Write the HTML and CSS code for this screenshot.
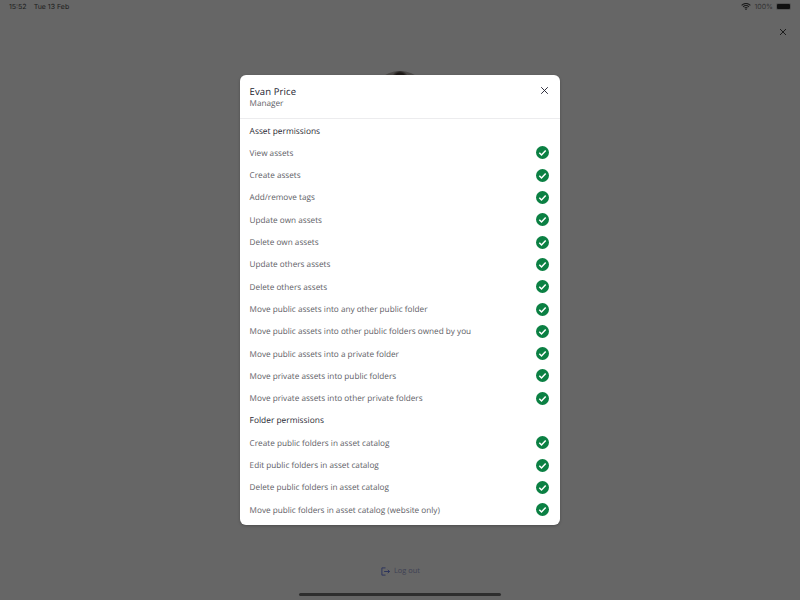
FILE: index.html
```html
<!DOCTYPE html>
<html lang="en">
<head>
<meta charset="utf-8">
<title>Evan Price permissions</title>
<link rel="stylesheet" href="styles.css">
</head>
<body>
<div class="screen">
  <header class="status">
    <div class="status-left"><span>15:52</span><span>Tue 13 Feb</span></div>
    <div class="status-right">
      <svg class="wifi" width="10" height="7" viewBox="0 0 11 8"><path d="M0.5 2.6a7 7 0 0 1 10 0M2.2 4.3a4.6 4.6 0 0 1 6.6 0M3.9 5.9a2.2 2.2 0 0 1 3.2 0" fill="none" stroke="#1a1a1a" stroke-width="1.2"/><circle cx="5.5" cy="7.1" r=".9" fill="#1a1a1a"/></svg>
      <span>100%</span>
      <span class="battery"><span class="battery-fill"></span></span>
    </div>
  </header>
  <div class="page-close">
    <svg width="8" height="8" viewBox="0 0 8 8"><path d="M1 1l6 6M7 1L1 7" stroke="#1c1c1c" stroke-width="1" fill="none"/></svg>
  </div>
  <div class="avatar"></div>
  <div class="logout">
    <svg width="9" height="9" viewBox="0 0 10 10"><path d="M5 1H1v8h4M3.5 5h6M7.5 3.2l2 1.8-2 1.8" fill="none" stroke="#28305c" stroke-width="1"/></svg>
    <span>Log out</span>
  </div>
  <div class="home-bar"></div>

  <section class="modal">
    <div class="modal-head">
      <div>
        <div class="name">Evan Price</div>
        <div class="role">Manager</div>
      </div>
      <svg class="modal-close" width="9" height="9" viewBox="0 0 9 9"><path d="M1.2 1.2l6.6 6.6M7.8 1.2L1.2 7.8" stroke="#1a1a2a" stroke-width=".9" fill="none"/></svg>
    </div>
    <div class="modal-body">
      <div class="heading">Asset permissions</div>
      <div class="row"><span>View assets</span><svg class="check" viewBox="0 0 13 13"><circle cx="6.5" cy="6.5" r="6.5"/><path d="M3.3 6.8l2.2 2.2 4.2-4.6"/></svg></div>
      <div class="row"><span>Create assets</span><svg class="check" viewBox="0 0 13 13"><circle cx="6.5" cy="6.5" r="6.5"/><path d="M3.3 6.8l2.2 2.2 4.2-4.6"/></svg></div>
      <div class="row"><span>Add/remove tags</span><svg class="check" viewBox="0 0 13 13"><circle cx="6.5" cy="6.5" r="6.5"/><path d="M3.3 6.8l2.2 2.2 4.2-4.6"/></svg></div>
      <div class="row"><span>Update own assets</span><svg class="check" viewBox="0 0 13 13"><circle cx="6.5" cy="6.5" r="6.5"/><path d="M3.3 6.8l2.2 2.2 4.2-4.6"/></svg></div>
      <div class="row"><span>Delete own assets</span><svg class="check" viewBox="0 0 13 13"><circle cx="6.5" cy="6.5" r="6.5"/><path d="M3.3 6.8l2.2 2.2 4.2-4.6"/></svg></div>
      <div class="row"><span>Update others assets</span><svg class="check" viewBox="0 0 13 13"><circle cx="6.5" cy="6.5" r="6.5"/><path d="M3.3 6.8l2.2 2.2 4.2-4.6"/></svg></div>
      <div class="row"><span>Delete others assets</span><svg class="check" viewBox="0 0 13 13"><circle cx="6.5" cy="6.5" r="6.5"/><path d="M3.3 6.8l2.2 2.2 4.2-4.6"/></svg></div>
      <div class="row"><span>Move public assets into any other public folder</span><svg class="check" viewBox="0 0 13 13"><circle cx="6.5" cy="6.5" r="6.5"/><path d="M3.3 6.8l2.2 2.2 4.2-4.6"/></svg></div>
      <div class="row"><span>Move public assets into other public folders owned by you</span><svg class="check" viewBox="0 0 13 13"><circle cx="6.5" cy="6.5" r="6.5"/><path d="M3.3 6.8l2.2 2.2 4.2-4.6"/></svg></div>
      <div class="row"><span>Move public assets into a private folder</span><svg class="check" viewBox="0 0 13 13"><circle cx="6.5" cy="6.5" r="6.5"/><path d="M3.3 6.8l2.2 2.2 4.2-4.6"/></svg></div>
      <div class="row"><span>Move private assets into public folders</span><svg class="check" viewBox="0 0 13 13"><circle cx="6.5" cy="6.5" r="6.5"/><path d="M3.3 6.8l2.2 2.2 4.2-4.6"/></svg></div>
      <div class="row"><span>Move private assets into other private folders</span><svg class="check" viewBox="0 0 13 13"><circle cx="6.5" cy="6.5" r="6.5"/><path d="M3.3 6.8l2.2 2.2 4.2-4.6"/></svg></div>
      <div class="heading">Folder permissions</div>
      <div class="row"><span>Create public folders in asset catalog</span><svg class="check" viewBox="0 0 13 13"><circle cx="6.5" cy="6.5" r="6.5"/><path d="M3.3 6.8l2.2 2.2 4.2-4.6"/></svg></div>
      <div class="row"><span>Edit public folders in asset catalog</span><svg class="check" viewBox="0 0 13 13"><circle cx="6.5" cy="6.5" r="6.5"/><path d="M3.3 6.8l2.2 2.2 4.2-4.6"/></svg></div>
      <div class="row"><span>Delete public folders in asset catalog</span><svg class="check" viewBox="0 0 13 13"><circle cx="6.5" cy="6.5" r="6.5"/><path d="M3.3 6.8l2.2 2.2 4.2-4.6"/></svg></div>
      <div class="row"><span>Move public folders in asset catalog (website only)</span><svg class="check" viewBox="0 0 13 13"><circle cx="6.5" cy="6.5" r="6.5"/><path d="M3.3 6.8l2.2 2.2 4.2-4.6"/></svg></div>
    </div>
  </section>
</div>
</body>
</html>
```
FILE: styles.css
```css
* { box-sizing: border-box; }
html, body { margin: 0; padding: 0; }
body { font-family: "Open Sans", "Liberation Sans", sans-serif; text-rendering: geometricPrecision; }
.screen { position: relative; width: 800px; height: 600px; overflow: hidden; background: #666666; }
.status { display: flex; justify-content: space-between; align-items: center; height: 13px; padding: 0 9px 0 9px; font-size: 7px; color: #1c1c1c; font-family: Inter, "Liberation Sans", sans-serif; }
.status-left { display: flex; gap: 7px; }
.status-right { display: flex; align-items: center; gap: 3px; color: #333; }
.battery { display: flex; width: 15px; height: 7px; padding: 1px; border-radius: 2px; background: #555; }
.battery-fill { flex: 1; background: #111; border-radius: 1px; }
.page-close { position: absolute; left: 779px; top: 28px; display: flex; }
.avatar { position: absolute; left: 370px; top: 71px; width: 60px; height: 60px; border-radius: 50%; background: radial-gradient(circle at 50% 7px, #1c1816 0, #1c1816 5px, #4b4947 8px, #565554 30px); }
.logout { position: absolute; left: 381px; top: 566px; display: flex; align-items: center; gap: 4px; font-size: 7.4px; color: #3f4154; }
.home-bar { position: absolute; left: 299px; top: 593px; width: 202px; height: 3px; border-radius: 2px; background: #2e2e2e; }
.modal { position: absolute; left: 240px; top: 75px; width: 320px; height: 450px; background: #fff; border-radius: 6px; box-shadow: 0 1px 3px rgba(0,0,0,.25); }
.modal-head { display: flex; justify-content: space-between; align-items: flex-start; height: 44px; padding: 10px 11px 0 9.6px; border-bottom: 1px solid #ececee; }
.name { font-size: 9.5px; line-height: 13px; color: #23232f; letter-spacing: .1px; }
.role { font-size: 8.2px; line-height: 12px; color: #5e5e66; }
.modal-close { margin-top: 1px; }
.modal-body { padding-top: .9px; }
.heading { display: flex; align-items: center; height: 22.31px; padding: 0 10px 0 9.6px; font-size: 8.4px; font-weight: 500; color: #2a2a34; }
.row { display: flex; justify-content: space-between; align-items: center; height: 22.31px; padding: 0 11px 0 9.6px; font-size: 8.2px; color: #5e5e66; }
.check { width: 13px; height: 13px; margin-bottom: .8px; }
.check circle { fill: #0b8043; }
.check path { fill: none; stroke: #fff; stroke-width: 1.5; }
```
